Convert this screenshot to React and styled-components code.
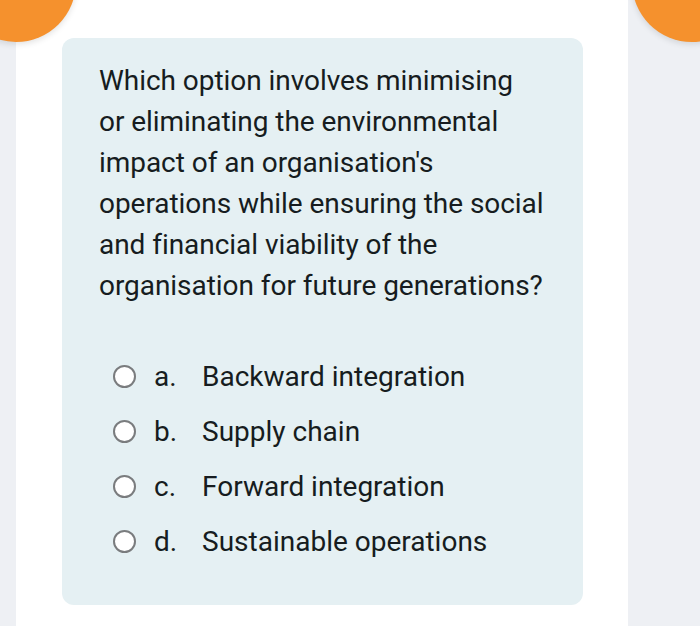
import React from "react"
import styled, { createGlobalStyle } from "styled-components"

const Global = createGlobalStyle`
  html, body {
    margin: 0;
    padding: 0;
    background: #eef0f4;
    font-family: Roboto, "Liberation Sans", sans-serif;
    overflow: hidden;
  }
`

const Page = styled.div`
  position: relative;
  width: 700px;
  height: 626px;
  overflow: hidden;
`

const Card = styled.div`
  margin-left: 16px;
  width: 612px;
  height: 626px;
  background: #ffffff;
  padding: 38px 0 0 46px;
  box-sizing: border-box;
`

const Blob = styled.div`
  position: absolute;
  top: -78px;
  left: ${({ side }) => (side === "left" ? "-44px" : "632px")};
  width: 120px;
  height: 120px;
  border-radius: 50%;
  background: #f5912d;
  box-shadow: 0 2px 6px rgba(0, 0, 0, 0.12);
`

const Panel = styled.div`
  width: 521px;
  height: 567px;
  box-sizing: border-box;
  background: #e5f0f3;
  border-radius: 12px;
  padding: 22px 10px 0 37px;
`

const Question = styled.p`
  margin: 0;
  font-size: 28px;
  line-height: 41px;
  color: #161c20;
  letter-spacing: -0.05px;
  white-space: nowrap;
`

const Options = styled.div`
  margin-top: 43px;
  display: flex;
  flex-direction: column;
`

const Row = styled.label`
  display: flex;
  align-items: center;
  height: 55px;
  padding-left: 14px;
  font-size: 28px;
  color: #161c20;
`

const Radio = styled.span`
  width: 19px;
  height: 19px;
  border-radius: 50%;
  border: 2.5px solid #7a7c7e;
  background: #ffffff;
  flex-shrink: 0;
`

const Letter = styled.span`
  width: 48px;
  margin-left: 18px;
`

const options = [
  ["a.", "Backward integration"],
  ["b.", "Supply chain"],
  ["c.", "Forward integration"],
  ["d.", "Sustainable operations"],
]

export default function App() {
  return (
    <Page>
      <Global />
      <Card>
        <Panel>
          <Question>
            Which option involves minimising
            <br />
            or eliminating the environmental
            <br />
            impact of an organisation's
            <br />
            operations while ensuring the social
            <br />
            and financial viability of the
            <br />
            organisation for future generations?
          </Question>
          <Options>
            {options.map(([l, t]) => (
              <Row key={l}>
                <Radio />
                <Letter>{l}</Letter>
                <span>{t}</span>
              </Row>
            ))}
          </Options>
        </Panel>
      </Card>
      <Blob side="left" />
      <Blob side="right" />
    </Page>
  )
}
